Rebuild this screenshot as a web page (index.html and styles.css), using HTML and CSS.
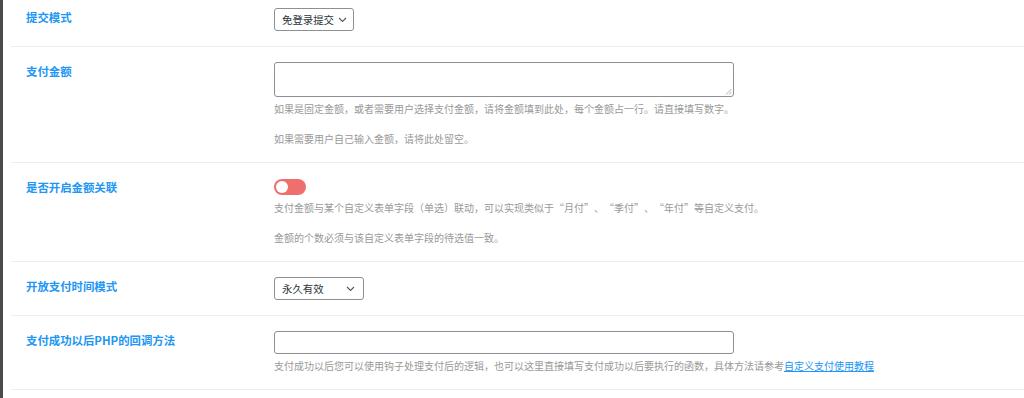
FILE: index.html
```html
<!DOCTYPE html>
<html lang="zh-CN">
<head>
<meta charset="utf-8">
<title>支付设置</title>
<link rel="stylesheet" href="styles.css">
</head>
<body>
<div class="frame">
  <div class="sidebar-edge"></div>
  <div class="form">
    <div class="row">
      <div class="label">提交模式</div>
      <div class="field">
        <div class="select sel-80"><span>免登录提交</span><svg class="chev" width="9" height="6" viewBox="0 0 9 6"><path d="M1 1l3.5 3.5L8 1" fill="none" stroke="#50575e" stroke-width="1.1"/></svg></div>
      </div>
    </div>
    <div class="row row-desc">
      <div class="label">支付金额</div>
      <div class="field">
        <div class="textarea"><svg class="grip" width="7" height="7" viewBox="0 0 7 7"><path d="M6.5 1L1 6.5M6.5 4L4 6.5" stroke="#999" stroke-width="0.8"/></svg></div>
        <p class="desc">如果是固定金额，或者需要用户选择支付金额，请将金额填到此处，每个金额占一行。请直接填写数字。</p>
        <p class="desc gap">如果需要用户自己输入金额，请将此处留空。</p>
      </div>
    </div>
    <div class="row row-desc">
      <div class="label">是否开启金额关联</div>
      <div class="field">
        <div class="toggle"><span class="knob"></span></div>
        <p class="desc desc-toggle">支付金额与某个自定义表单字段（单选）联动，可以实现类似于<span class="q qo">“</span>月付<span class="q qc">”</span>、<span class="q qo">“</span>季付<span class="q qc">”</span>、<span class="q qo">“</span>年付<span class="q qc">”</span>等自定义支付。</p>
        <p class="desc gap">金额的个数必须与该自定义表单字段的待选值一致。</p>
      </div>
    </div>
    <div class="row">
      <div class="label">开放支付时间模式</div>
      <div class="field">
        <div class="select sel-90"><span>永久有效</span><svg class="chev" width="9" height="6" viewBox="0 0 9 6"><path d="M1 1l3.5 3.5L8 1" fill="none" stroke="#50575e" stroke-width="1.1"/></svg></div>
      </div>
    </div>
    <div class="row row-desc">
      <div class="label">支付成功以后PHP的回调方法</div>
      <div class="field">
        <div class="input"></div>
        <p class="desc">支付成功以后您可以使用钩子处理支付后的逻辑，也可以这里直接填写支付成功以后要执行的函数，具体方法请参考<a href="#" class="link">自定义支付使用教程</a></p>
      </div>
    </div>
  </div>
</div>
</body>
</html>
```

FILE: styles.css
```css
* { box-sizing: border-box; }
html, body { margin: 0; padding: 0; background: #fff; }
body {
  font-family: "Noto Sans CJK SC", "Noto Sans", sans-serif;
  font-size: 10px;
  color: #2c3338;
  overflow: hidden;
  height: 398px;
}
.frame { display: flex; height: 398px; }
.sidebar-edge { width: 3px; background: #4b4b4b; flex: none; }
.form { flex: 1; margin-left: 8px; margin-top: -7px; }
.row {
  display: flex;
  border-bottom: 1px solid #ededed;
  padding: 15px 0 15px 15px;
}
.row-desc { padding-bottom: 14px; }
.label {
  width: 248px;
  flex: none;
  font-size: 11.4px;
  font-weight: 700;
  color: #2196f3;
  line-height: 18px;
}
.field { flex: 1; }
.select {
  height: 23px;
  border: 1px solid #8c8f94;
  border-radius: 3px;
  display: flex;
  align-items: center;
  justify-content: space-between;
  padding: 0 6px 0 7px;
  font-size: 10.4px;
  color: #2c3338;
  background: #fff;
}
.sel-80 { width: 80px; }
.sel-90 { width: 90px; padding-right: 8px; }
.chev { flex: none; }
.textarea {
  width: 460px;
  height: 35px;
  border: 1px solid #8c8f94;
  border-radius: 3px;
  position: relative;
}
.grip { position: absolute; right: 1px; bottom: 1px; }
.input {
  width: 460px;
  height: 23px;
  border: 1px solid #8c8f94;
  border-radius: 3px;
}
.toggle {
  width: 32px;
  height: 16px;
  border-radius: 8px;
  background: #ef6e6e;
  display: flex;
  align-items: center;
  padding-left: 2px;
  margin-top: 1px;
}
.knob { width: 12px; height: 12px; border-radius: 50%; background: #fff; }
.desc {
  margin: 3px 0 0;
  font-size: 10px;
  line-height: 18px;
  color: #999;
}
.desc-toggle { margin-top: 4px; }
.desc.gap { margin-top: 12px; }
.q { display: inline-block; width: 10px; }
.qo { text-align: right; }
.qc { text-align: left; }
.link { color: #2196f3; text-decoration: underline; }
```
